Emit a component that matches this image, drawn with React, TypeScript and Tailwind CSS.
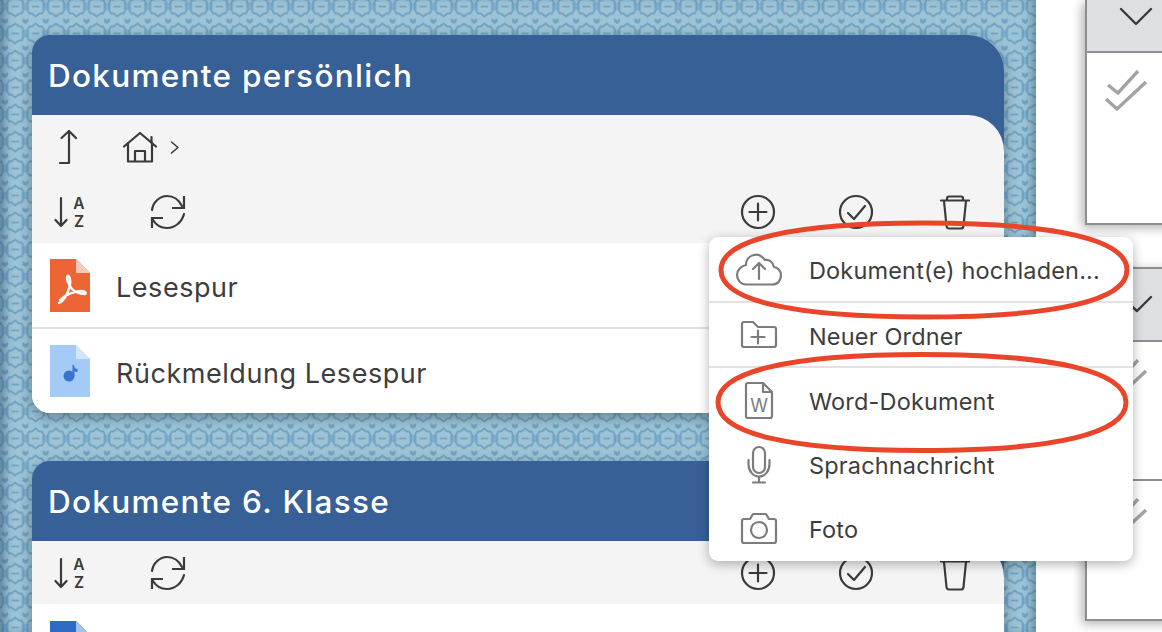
import React from "react";

function Ico({ box, children, stroke = "#3a3a3a", sw = 2.2 }: { box: [number, number, number, number]; children: React.ReactNode; stroke?: string; sw?: number }) {
  return (
    <svg viewBox={box.join(" ")} width={box[2]} height={box[3]} fill="none" stroke={stroke} strokeWidth={sw} strokeLinecap="round" strokeLinejoin="round" className="block shrink-0">
      {children}
    </svg>
  );
}

const SortIcon = () => (
  <Ico box={[54, 193, 32, 36]}>
    <path d="M61 197V225M55.5 219L61 225L66.5 219" />
    <text x="79" y="207.5" textAnchor="middle" fontFamily="Inter, sans-serif" fontWeight="600" fontSize="15.5" fill="#3a3a3a" stroke="none">A</text>
    <text x="79" y="226" textAnchor="middle" fontFamily="Inter, sans-serif" fontWeight="600" fontSize="15.5" fill="#3a3a3a" stroke="none">Z</text>
  </Ico>
);
const RefreshIcon = () => (
  <Ico box={[150, 193, 36, 36]}>
    <path d="M152 209C153 201 160 195 167 195C174 195 179 199 182 205" />
    <path d="M184 195V207H172" strokeLinecap="butt" strokeLinejoin="miter" />
    <path d="M184 213C182 221 175 227 167 227C161 227 156 224 153 219" />
    <path d="M152 227V217H163" strokeLinecap="butt" strokeLinejoin="miter" />
  </Ico>
);
const PlusIcon = () => (
  <Ico box={[740, 193, 36, 36]}>
    <circle cx="758" cy="211" r="16" />
    <path d="M749.5 211H766.5M758 202.5V219.5" />
  </Ico>
);
const CheckIcon = () => (
  <Ico box={[838, 193, 36, 36]}>
    <circle cx="856" cy="211" r="16" />
    <path d="M848 212L854 218L865 205" />
  </Ico>
);
const TrashIcon = () => (
  <Ico box={[938, 193, 34, 36]}>
    <path d="M941 199.5H969" />
    <path d="M947 199V197.5Q947 195.5 949 195.5H961Q963 195.5 963 197.5V199" />
    <path d="M944 200L946.5 225Q946.8 227.5 949 227.5H961Q963.2 227.5 963.5 225L966 200" />
  </Ico>
);

function Toolbar() {
  return (
    <div className="flex h-[63px] items-center pl-[22px]">
      <SortIcon />
      <div className="ml-[64px]"><RefreshIcon /></div>
      <div className="ml-[554px]"><PlusIcon /></div>
      <div className="ml-[62px]"><CheckIcon /></div>
      <div className="ml-[64px]"><TrashIcon /></div>
    </div>
  );
}

const PdfFile = () => (
  <svg viewBox="50 258 40 53" width="40" height="53" className="block blur-[0.4px]">
    <path d="M50 258H76L90 272V311H50Z" fill="#ee6535" />
    <path d="M76 258L90 272H76Z" fill="#f3c9b8" />
    <path d="M59 302C64 300 68 292 70 284C71 278 69 274 67.5 275C66 277 68 283 72 288C75 291 80 293 85 293C87 292 85 290 81 290C74 290 65 294 60 299" fill="none" stroke="#fff" strokeWidth="2.4" strokeLinecap="round" strokeLinejoin="round" />
  </svg>
);
const AudioFile = () => (
  <svg viewBox="50 345 40 53" width="40" height="53" className="block blur-[0.4px]">
    <path d="M50 345H76L90 359V397H50Z" fill="#a3cbf6" />
    <path d="M76 345L90 359H76Z" fill="#d3e5fa" />
    <circle cx="69" cy="376" r="5.5" fill="#3a74cc" />
    <path d="M72.5 376V365H74C74 368 76 369 77.5 369V372C76 372 75 371.5 74.5 371V376Z" fill="#3a74cc" />
  </svg>
);
const WordFile = () => (
  <svg viewBox="50 621 40 53" width="40" height="53" className="block blur-[0.4px]">
    <path d="M50 621H76L90 635V674H50Z" fill="#2f6bc6" />
    <path d="M76 621L90 635H76Z" fill="#a5c3ea" />
  </svg>
);

function Row({ icon, label, h, last }: { icon: React.ReactNode; label: string; h: string; last?: boolean }) {
  return (
    <div className={`flex ${h} items-center bg-white pl-[18px] ${last ? "" : "border-b-2 border-[#e2e2e2]"}`}>
      <div className="w-[66px] shrink-0">{icon}</div>
      <span className="mt-[6px] text-[27px] tracking-[0.55px] text-[#3d3d3d]">{label}</span>
    </div>
  );
}

function Card({ title, children, className }: { title: string; children: React.ReactNode; className?: string }) {
  return (
    <section className={`w-[972px] shrink-0 rounded-tl-[18px] rounded-tr-[36px] rounded-b-[18px] bg-[#366096] shadow-[0_4px_14px_rgba(0,0,0,0.35)] ${className ?? ""}`}>
      <h2 className="flex h-[80px] items-center pl-[16px] pt-[2px] text-[31.5px] font-medium tracking-[1.3px] text-white">{title}</h2>
      <div className="overflow-hidden rounded-tr-[36px] rounded-b-[18px] bg-[#f4f4f4]">{children}</div>
    </section>
  );
}

function MenuItem({ icon, label, divider, h }: { icon: React.ReactNode; label: string; divider?: boolean; h: string }) {
  return (
    <div className={`flex ${h} items-center ${divider ? "border-b-2 border-[#e2e2e2]" : ""}`}>
      <div className="flex w-[100px] shrink-0 justify-center">{icon}</div>
      <span className="mt-[4px] text-[23.5px] tracking-[0.16px] text-[#3d3d3d]">{label}</span>
    </div>
  );
}

const G = "#7c7c7c";

function PanelChecks() {
  return (
    <div className="pl-[17px] pt-[17px]">
      <svg viewBox="1086 70 60 50" width="60" height="50" className="block" fill="none" stroke="#a3a3a3" strokeWidth="3.4">
        <path d="M1108 85L1118 93L1138 71" transform="translate(-18 0)" />
        <path d="M1106 99L1117 109L1146 82" transform="translate(-18 0)" />
      </svg>
    </div>
  );
}

export default function App() {
  return (
    <div className="relative flex h-[632px] w-[1162px] overflow-hidden bg-white font-['Inter',sans-serif]">
      <div className="relative w-[1036px] shrink-0 bg-[#9dc3d5]">
        <svg className="absolute inset-0 block blur-[0.6px]" width="1036" height="632">
          <defs>
            <pattern id="tile" x="5" y="-7" width="20.4" height="27" patternUnits="userSpaceOnUse">
              <path d="M10.2 3.5L14 6.5H16.5L18.5 10V17L16.5 20.5H14L10.2 23.5L6.4 20.5H3.9L1.9 17V10L3.9 6.5H6.4Z" fill="none" stroke="#6fa4c6" strokeWidth="1.8" />
              <path d="M1.9 10V17M18.5 10V17" stroke="#6fa4c6" strokeWidth="3" />
              <path d="M6.5 13.5H13.9" stroke="#6fa4c6" strokeWidth="1.8" />
              <path d="M0 0L3 -2V2L0 4L-3 2V-2Z M20.4 0L23.4 -2V2L20.4 4L17.4 2V-2Z M0 27L3 25V29L0 31L-3 29V25Z M20.4 27L23.4 25V29L20.4 31L17.4 29V25Z" fill="#6fa4c6" />
            </pattern>
          </defs>
          <rect width="1036" height="632" fill="url(#tile)" />
        </svg>
        <div className="absolute inset-0 shadow-[inset_10px_0_8px_-5px_rgba(30,60,90,0.45),inset_-9px_0_8px_-5px_rgba(30,60,90,0.4)]" />
        <div className="relative flex flex-col gap-[48px] pl-[32px] pt-[35px]">
          <Card title="Dokumente persönlich">
            <div className="flex h-[65px] items-center pl-[27px]">
              <Ico box={[60, 130, 20, 36]}>
                <path d="M70 131V163H61M62.5 138L70 131L77 138" />
              </Ico>
              <div className="ml-[43px]">
                <Ico box={[123, 131, 36, 33]}>
                  <path d="M125 146.5L141 133L157 146.5M152.5 137V143" />
                  <path d="M129 143V161.5H153V143M136 161V151H146V161" />
                </Ico>
              </div>
              <div className="ml-[12px]">
                <Ico box={[171, 141, 10, 15]} sw={1.6}>
                  <path d="M172.5 143L179 148.5L172.5 154" />
                </Ico>
              </div>
            </div>
            <Toolbar />
            <Row h="h-[86px]" icon={<PdfFile />} label="Lesespur" />
            <Row h="h-[84px]" icon={<AudioFile />} label="Rückmeldung Lesespur" last />
          </Card>
          <Card title="Dokumente 6. Klasse" className="h-[300px]">
            <Toolbar />
            <div className="h-[200px] bg-white pl-[18px] pt-[17px]"><WordFile /></div>
          </Card>
        </div>
      </div>

      <div className="ml-[49px] flex w-[90px] shrink-0 flex-col">
        <div className="h-[225px] shrink-0 border-b-2 border-l-2 border-[#8f8f8f] bg-white shadow-[-3px_3px_10px_rgba(0,0,0,0.3)]">
          <div className="h-[53px] border-b-2 border-[#8f8f8f] bg-[#dfe0e4] pl-[32px] pt-[7px]">
            <Ico box={[1119, 7, 34, 19]} sw={2.4}><path d="M1121 9L1136 24L1151 9" /></Ico>
          </div>
          <PanelChecks />
        </div>
        <div className="mt-[42px] h-[354px] shrink-0 border-y-2 border-l-2 border-[#8f8f8f] bg-white shadow-[-3px_3px_10px_rgba(0,0,0,0.3)]">
          <div className="flex h-[73px] items-center border-b-2 border-[#8f8f8f] bg-[#dfe0e4] pl-[39px]">
            <Ico box={[1126, 296, 27, 19]} sw={2.4}><path d="M1128 304L1137 312L1151 298" /></Ico>
          </div>
          <div className="h-[139px] border-b-2 border-[#8f8f8f]"><PanelChecks /></div>
          <PanelChecks />
        </div>
      </div>

      <div className="absolute left-[709px] top-[237px] h-[324px] w-[424px] rounded-[9px] bg-white shadow-[0_3px_12px_rgba(0,0,0,0.3)]">
        <MenuItem
          h="h-[66px]"
          divider
          label="Dokument(e) hochladen..."
          icon={
            <Ico box={[735, 251, 48, 35]} stroke={G}>
              <path d="M746 283.5H772C778 283.5 781 279 781 274.5C781 270 778 266.5 774 266C773 261 769 258 765 259C762 255 758 253 754 254C749 255 746 259 746 264C741 265 737 269 737 274C737 279 741 283.5 746 283.5Z" />
              <path d="M759 278V262M753 268L759 262L765 268" />
            </Ico>
          }
        />
        <MenuItem
          h="h-[65px]"
          divider
          label="Neuer Ordner"
          icon={
            <Ico box={[740, 320, 38, 29]} stroke={G}>
              <path d="M742 345V324Q742 322 744 322H753L758 327H774Q776 327 776 329V345Q776 347 774 347H744Q742 347 742 345Z" />
              <path d="M751.5 337H764.5M758 330.5V343.5" />
            </Ico>
          }
        />
        <MenuItem
          h="h-[64px]"
          label="Word-Dokument"
          icon={
            <Ico box={[744, 381, 30, 39]} stroke={G}>
              <path d="M748 383H763L772 392V416Q772 418 770 418H748Q746 418 746 416V385Q746 383 748 383Z" />
              <path d="M763 383V392H772" />
              <text x="759" y="412" textAnchor="middle" fontFamily="Inter, sans-serif" fontSize="18" fill={G} stroke="none">W</text>
            </Ico>
          }
        />
        <MenuItem
          h="h-[64px]"
          label="Sprachnachricht"
          icon={
            <Ico box={[746, 445, 26, 39]} stroke={G}>
              <rect x="753" y="447" width="12" height="26" rx="6" />
              <path d="M748.5 460V464C748.5 471 753 476.5 759 476.5C765 476.5 769.5 471 769.5 464V460M759 477V482M753 482.5H765" />
            </Ico>
          }
        />
        <MenuItem
          h="h-[64px]"
          label="Foto"
          icon={
            <Ico box={[740, 511, 38, 34]} stroke={G}>
              <path d="M744 519H750L753 514H766L769 519H774Q776 519 776 521V541Q776 543 774 543H744Q742 543 742 541V521Q742 519 744 519Z" />
              <circle cx="759" cy="530" r="8" />
            </Ico>
          }
        />
      </div>

      <svg className="pointer-events-none absolute left-0 top-0 block" width="1162" height="632" fill="none" stroke="#e8452a" strokeWidth="5">
        <path d="M721 270C721 239.5 792 223 924 223C1056 223 1127 239.5 1127 270C1127 300.5 1056 317 924 317C792 317 721 300.5 721 270Z" />
        <path d="M718 402.5C718 371.5 789 354.5 922 354.5C1055 354.5 1126 371.5 1126 402.5C1126 433.5 1055 450.5 922 450.5C789 450.5 718 433.5 718 402.5Z" />
      </svg>
    </div>
  );
}
